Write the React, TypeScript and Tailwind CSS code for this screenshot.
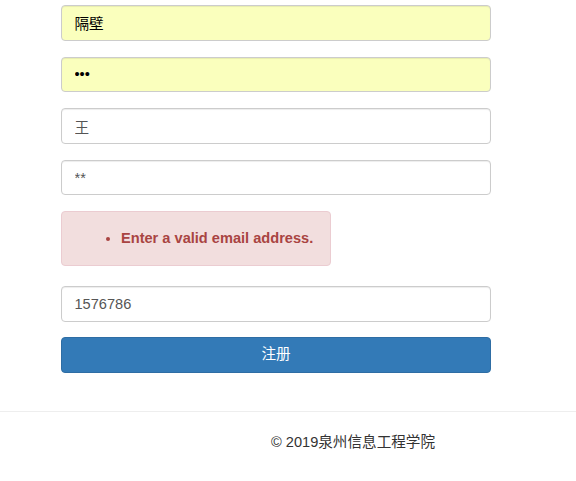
import React from "react";

const inputBase =
  "block w-full h-[35.5px] px-[12.5px] rounded-[4px] border border-[#cccccc] text-[14.6px] outline-none shadow-[inset_0_1px_1px_rgba(0,0,0,0.075)]";

export default function App() {
  return (
    <div
      className="w-[576px] min-h-[481px] bg-white text-[#333333]"
      style={{ fontFamily: '"Liberation Sans", Arial, "Noto Sans CJK SC", sans-serif' }}
    >
      <div className="pt-[5px] pl-[61px] w-[491px]">
        <form className="flex flex-col" onSubmit={(e) => e.preventDefault()}>
          <input
            readOnly
            defaultValue="隔壁"
            className={`${inputBase} bg-[#faffbd] text-black mb-[16.17px]`}
          />
          <input
            readOnly
            type="password"
            defaultValue="abc"
            className={`${inputBase} bg-[#faffbd] text-black mb-[16.17px]`}
          />
          <input
            readOnly
            defaultValue="王"
            className={`${inputBase} bg-white text-[#555555] mb-[16.17px]`}
          />
          <input
            readOnly
            defaultValue="**"
            className={`${inputBase} bg-white text-[#555555] mb-[15.7px]`}
          />
          <div className="w-[270px] h-[54.5px] rounded-[4px] border border-[#ebccd1] bg-[#f2dede] text-[#a94442] flex items-center mb-[20.5px]">
            <ul className="list-disc pl-[59px] m-0">
              <li className="text-[14.6px] font-bold leading-[20px]">Enter a valid email address.</li>
            </ul>
          </div>
          <input
            readOnly
            defaultValue="1576786"
            className={`${inputBase} bg-white text-[#555555] mb-[15.5px]`}
          />
          <button
            type="submit"
            className="h-[36px] w-full rounded-[4px] border border-[#2e6da4] bg-[#337ab7] text-white text-[14.6px]"
          >
            注册
          </button>
        </form>
      </div>
      <div className="mt-[37.6px] border-t border-[#eeeeee] pt-[20px]">
        <p className="pl-[271px] text-[14.6px] leading-[20px] text-[#333333]">© 2019泉州信息工程学院</p>
      </div>
    </div>
  );
}
